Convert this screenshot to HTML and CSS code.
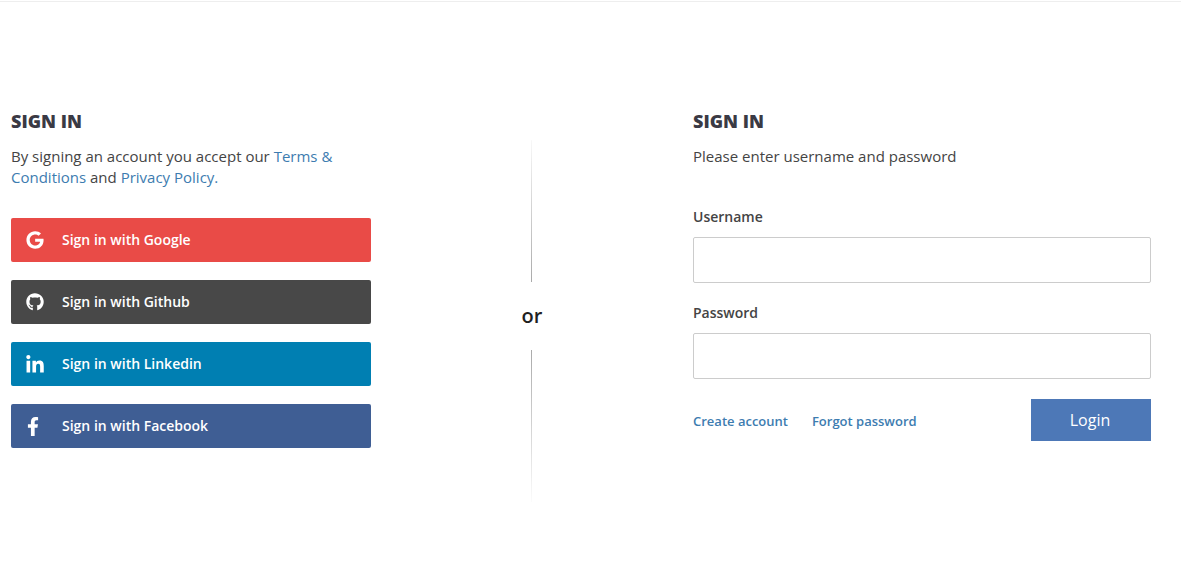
FILE: index.html
```html
<!DOCTYPE html>
<html lang="en">
<head>
<meta charset="utf-8">
<title>Sign in</title>
<link rel="stylesheet" href="styles.css">
</head>
<body>
<main class="page">
  <section class="social">
    <h2 class="title">SIGN IN</h2>
    <p class="intro">By signing an account you accept our <a href="#">Terms &amp; Conditions</a> and <a href="#">Privacy Policy.</a></p>
    <div class="buttons">
      <a class="sbtn google" href="#">
        <span class="ico"><svg class="i18" viewBox="0 0 488 512"><path d="M488 261.8C488 403.3 391.1 504 248 504 110.8 504 0 393.2 0 256S110.8 8 248 8c66.8 0 123 24.5 166.3 64.9l-67.5 64.9C258.5 52.6 94.3 116.6 94.3 256c0 86.5 69.1 156.6 153.7 156.6 98.2 0 135-70.4 140.8-106.9H248v-85.3h236.1c2.3 12.7 3.9 24.9 3.9 41.4z"/></svg></span>
        <span class="sbtn-label">Sign in with Google</span>
      </a>
      <a class="sbtn github" href="#">
        <span class="ico"><svg class="i18" viewBox="0 0 496 512"><path d="M165.9 397.4c0 2-2.3 3.6-5.2 3.6-3.3 0-5.6-1.6-5.6-3.6 0-2 2.3-3.6 5.2-3.6 3-.3 5.6 1.3 5.6 3.6zm-31.1-4.5c-.7 2 1.3 4.3 4.3 4.9 2.6 1 5.6 0 6.2-2s-1.3-4.3-4.3-5.2c-2.6-.7-5.5.3-6.2 2.3zm44.2-1.7c-2.9.7-4.9 2.6-4.6 4.9.3 2 2.9 3.3 5.9 2.6 2.9-.7 4.9-2.6 4.6-4.6-.3-1.9-3-3.2-5.9-2.9zM244.8 8C106.1 8 0 113.3 0 252c0 110.9 69.8 205.8 169.5 239.2 12.8 2.3 17.3-5.6 17.3-12.1 0-6.2-.3-40.4-.3-61.4 0 0-70 15-84.7-29.8 0 0-11.4-29.1-27.8-36.6 0 0-22.9-15.7 1.6-15.4 0 0 24.9 2 38.6 25.8 21.9 38.6 58.6 27.5 72.9 20.9 2.3-16 8.8-27.1 16-33.7-55.9-6.2-112.3-14.3-112.3-110.5 0-27.5 7.6-41.3 23.6-58.9-2.6-6.5-11.1-33.3 2.6-67.9 20.9-6.5 69 27 69 27 20-5.6 41.5-8.5 62.8-8.5s42.8 2.9 62.8 8.5c0 0 48.1-33.6 69-27 13.7 34.7 5.2 61.4 2.6 67.9 16 17.7 25.8 31.5 25.8 58.9 0 96.5-58.9 104.2-114.8 110.5 9.2 7.9 17 22.9 17 46.4 0 33.7-.3 75.4-.3 83.6 0 6.5 4.6 14.4 17.3 12.1C428.2 457.8 496 362.9 496 252 496 113.3 383.5 8 244.8 8z"/></svg></span>
        <span class="sbtn-label">Sign in with Github</span>
      </a>
      <a class="sbtn linkedin" href="#">
        <span class="ico"><svg class="i18 in" viewBox="0 0 448 512"><path d="M100.28 448H7.4V148.9h92.88zM53.79 108.1C24.09 108.1 0 83.5 0 53.8a53.79 53.79 0 0 1 107.58 0c0 29.7-24.1 54.3-53.79 54.3zM447.9 448h-92.68V302.4c0-34.7-.7-79.2-48.29-79.2-48.29 0-55.69 37.7-55.69 76.7V448h-92.78V148.9h89.08v40.8h1.3c12.4-23.5 42.69-48.3 87.88-48.3 94 0 111.28 61.9 111.28 142.3V448z"/></svg></span>
        <span class="sbtn-label">Sign in with Linkedin</span>
      </a>
      <a class="sbtn facebook" href="#">
        <span class="ico"><svg class="i18 fb" viewBox="0 0 320 512"><path d="M279.14 288l14.22-92.66h-88.91v-60.13c0-25.35 12.42-50.06 52.24-50.06h40.42V6.26S260.43 0 225.36 0c-73.22 0-121.08 44.38-121.08 124.72v70.62H22.89V288h81.39v224h100.17V288z"/></svg></span>
        <span class="sbtn-label">Sign in with Facebook</span>
      </a>
    </div>
  </section>

  <div class="divider">
    <span class="line line-top"></span>
    <span class="or">or</span>
    <span class="line line-bottom"></span>
  </div>

  <section class="login">
    <h2 class="title">SIGN IN</h2>
    <p class="intro">Please enter username and password</p>
    <form class="form">
      <label class="label" for="username">Username</label>
      <input class="input" id="username" type="text">
      <label class="label" for="password">Password</label>
      <input class="input" id="password" type="password">
      <div class="actions">
        <a class="link" href="#">Create account</a>
        <a class="link" href="#">Forgot password</a>
        <button class="submit" type="button">Login</button>
      </div>
    </form>
  </section>
</main>
</body>
</html>
```
FILE: styles.css
```css
* { box-sizing: border-box; }
html, body { margin: 0; height: 100%; }
body {
  background: #fff;
  font-family: "Open Sans", sans-serif;
  color: #444;
  padding-top: 1px;
  overflow: hidden;
}
a { color: #3d7cb0; text-decoration: none; }

.page {
  display: flex;
  align-items: flex-start;
  border-top: 1px solid #eee;
  padding: 106px 30px 0 11px;
}

.title {
  margin: 0;
  font-size: 18px;
  line-height: 26px;
  font-weight: 800;
  color: #3a3a44;
}
.intro {
  margin: 12px 0 0;
  font-size: 15px;
  line-height: 21px;
}

.social { width: 360px; flex: none; }
.buttons {
  display: flex;
  flex-direction: column;
  gap: 18px;
  margin-top: 30px;
}
.sbtn {
  display: flex;
  align-items: center;
  height: 44px;
  border-radius: 2px;
  color: #fff;
  font-size: 14px;
  font-weight: 600;
}
.sbtn-label { margin-bottom: 2px; }
.ico {
  display: flex;
  justify-content: center;
  flex: none;
  width: 51px;
  padding-right: 3px;
}
.i18 { width: 18px; height: 18px; fill: #fff; display: block; }
.in { height: 20px; width: 18px; margin-top: 1px; }
.fb { height: 19px; width: 12px; margin-right: 5px; }
.google { background: #e94b47; }
.github { background: #484848; }
.linkedin { background: #007fb2; }
.facebook { background: #3f5e94; }

.divider {
  flex: none;
  width: 322px;
  display: flex;
  flex-direction: column;
  align-items: flex-start;
  padding-left: 160px;
  margin-top: 32px;
}
.line { width: 1px; display: block; }
.line-top { height: 142px; background: linear-gradient(to bottom, rgba(170,170,170,0.08), #aaa); }
.line-bottom { height: 152px; background: linear-gradient(to top, rgba(170,170,170,0.04), #aaa); }
.or {
  height: 68px;
  line-height: 68px;
  font-size: 20px;
  font-weight: 600;
  color: #1f1f1f;
  margin-left: -9.5px;
}

.login { width: 458px; flex: none; }
.form { margin-top: 32px; display: flex; flex-direction: column; }
.label {
  font-size: 14px;
  line-height: 20px;
  font-weight: 600;
  margin-top: 8px;
  margin-bottom: 10px;
}
.input {
  width: 100%;
  height: 46px;
  border: 1px solid #ccc;
  border-radius: 2px;
  background: #fff;
  margin-bottom: 12px;
  padding: 0 10px;
  font: inherit;
}
.actions {
  display: flex;
  align-items: center;
  gap: 24px;
  margin-top: 8px;
}
.link { font-size: 13px; font-weight: 600; margin-top: 2px; }
.submit {
  margin-left: auto;
  width: 120px;
  height: 42px;
  border: 0;
  background: #4d78b7;
  color: #fff;
  font-family: inherit;
  font-size: 16px;
  padding: 0 2px 0 0;
}
```
